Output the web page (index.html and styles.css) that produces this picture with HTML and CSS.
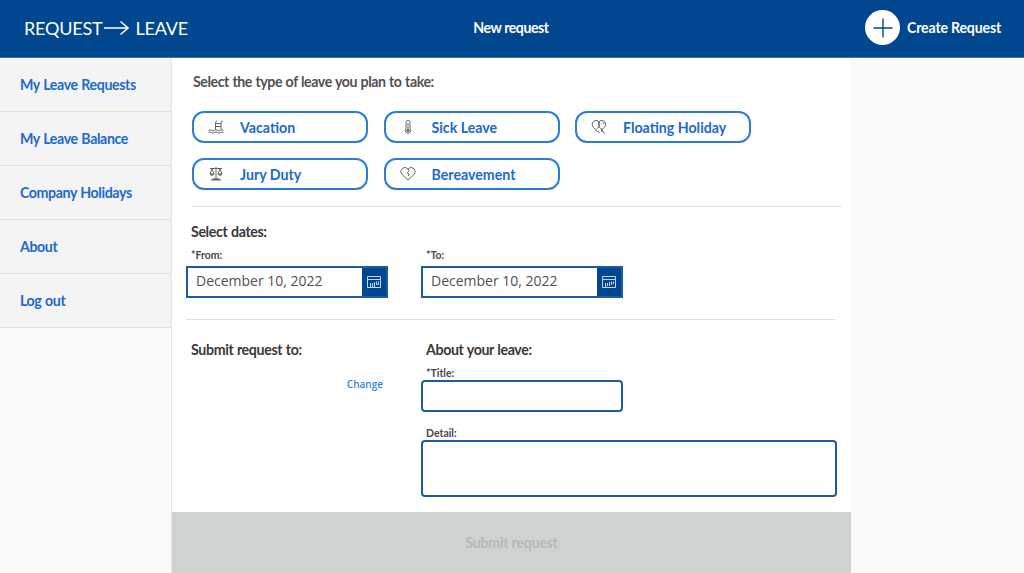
FILE: index.html
```
<!DOCTYPE html>
<html lang="en">
<head>
  <meta charset="UTF-8" />
  <meta name="viewport" content="width=device-width, initial-scale=1.0" />
  <title>Request Leave - New request</title>
  <link rel="stylesheet" href="styles.css">
</head>
<body>

  <header class="topbar">
    <div class="logo">
      <span>REQUEST</span>
      <svg class="logo-arrow" viewBox="0 0 25 16"><path d="M0 8H24M16.5 1.5L24 8L16.5 14.5"/></svg>
      <span>LEAVE</span>
    </div>
    <h1 class="page-title">New request</h1>
    <a class="create">
      <span class="create-icon">
        <svg viewBox="0 0 20 20"><path d="M10 0.5V19.5M0.5 10H19.5"/></svg>
      </span>
      <span class="create-label">Create Request</span>
    </a>
  </header>

  <div class="layout">
    <nav class="sidebar">
      <a>My Leave Requests</a>
      <a>My Leave Balance</a>
      <a>Company Holidays</a>
      <a>About</a>
      <a>Log out</a>
    </nav>

    <main class="content">
      <!-- Leave type -->
      <section class="types">
        <h2 class="types-title">Select the type of leave you plan to take:</h2>
        <div class="type-grid">
          <button class="type-btn">
            <svg class="icon" viewBox="0 0 16 16"><path d="M7.5 10.5V3.5Q7.5 2 9.2 2M13 10.5V3.5Q13 2 14.8 2M7.5 4.5H13M7.5 7.5H13M0.5 11.5Q2 10 3.5 11.3T6.5 11.3T9.5 11.3T12.5 11.3T15.5 11.3M0.5 13.7Q2 12.2 3.5 13.5T6.5 13.5T9.5 13.5T12.5 13.5T15.5 13.5"/></svg>
            Vacation
          </button>
          <button class="type-btn">
            <svg class="icon" viewBox="0 0 16 16"><path d="M6 9.8V3.5A2 2 0 0 1 10 3.5V9.8A2.7 2.7 0 1 1 6 9.8ZM8 4V11"/><circle class="solid" cx="8" cy="11.5" r="1.6"/></svg>
            Sick Leave
          </button>
          <button class="type-btn">
            <svg class="icon" viewBox="0 0 16 16"><path d="M5.2 10.3C2.8 9.8 1.2 7.4 1.2 5.2A3.9 3.9 0 0 1 8 2.7A3.8 3.8 0 0 1 14.6 5.2C14.6 7.6 13 9.4 10.8 10.2C8.8 9.4 7.3 7.3 7.3 5.2Q7.3 3.6 8 2.7Q9 4 8.8 5.4Q8.5 7.6 6.5 9.5M5.2 10.3Q4.6 12.4 6.4 12.4T8.5 14M10.8 10.2L10 11.5H11.6ZM11 11.5Q10.5 13 12 13T13.5 14.5M11.6 3.3Q12.8 3.7 12.9 5"/></svg>
            Floating Holiday
          </button>
          <button class="type-btn">
            <svg class="icon" viewBox="0 0 16 16"><path d="M2 2.5H14M8 1V12.5M4 2.5L2 8M4 2.5L6 8M12 2.5L10 8M12 2.5L14 8"/><path class="solid" d="M1.5 7.5H6.5Q6 9.7 4 9.7T1.5 7.5ZM9.5 7.5H14.5Q14 9.7 12 9.7T9.5 7.5ZM2.5 14.5Q4 12 8 12T13.5 14.5Z"/></svg>
            Jury Duty
          </button>
          <button class="type-btn">
            <svg class="icon" viewBox="0 0 16 16"><path d="M8 14.2L1.8 8.2A4 4 0 0 1 8 3A4 4 0 0 1 14.2 8.2ZM8 3L9.3 4.8L7.2 6.8L9.2 8L8 10.5"/></svg>
            Bereavement
          </button>
        </div>
      </section>

      <!-- Dates -->
      <section class="dates">
        <h2>Select dates:</h2>
        <div class="columns">
          <div class="field">
            <label for="from">*From:</label>
            <div class="date-box">
              <input id="from" type="text" value="December 10, 2022">
              <button class="date-btn" aria-label="Pick start date">
                <svg viewBox="0 0 14 14"><path d="M0.5 1.5H13.5V12.5H0.5ZM0.5 4.5H13.5M3.5 12V8M5.5 8V12M7.5 12V7M9.5 6.5V9.5H11.5V6.5"/></svg>
              </button>
            </div>
          </div>
          <div class="field">
            <label for="to">*To:</label>
            <div class="date-box">
              <input id="to" type="text" value="December 10, 2022">
              <button class="date-btn" aria-label="Pick end date">
                <svg viewBox="0 0 14 14"><path d="M0.5 1.5H13.5V12.5H0.5ZM0.5 4.5H13.5M3.5 12V8M5.5 11V8M7.5 11V7M9.5 6.5V10M11.5 6.5V9"/></svg>
              </button>
            </div>
          </div>
        </div>
      </section>

      <!-- Approver and details -->
      <section class="details columns">
        <div class="approver">
          <h2>Submit request to:</h2>
          <a class="change">Change</a>
        </div>
        <div class="about">
          <h2>About your leave:</h2>
          <label for="title">*Title:</label>
          <input id="title" class="text-box" type="text">
          <label for="detail">Detail:</label>
          <textarea id="detail" class="text-box"></textarea>
        </div>
      </section>

      <button class="submit" disabled>Submit request</button>
    </main>
  </div>

</body>
</html>
```
FILE: styles.css
```
:root {
  --brand: #00478f;
  --link: #2069ce;
  --outline: #2b7cd3;
  --field: #1c5ba2;
  --text: #3b3838;
  --line: #dfdfdf;
}

* {
  box-sizing: border-box;
  margin: 0;
  padding: 0;
}

body {
  height: 100vh;
  background: #f9f9f9;
  color: var(--text);
  font-family: Lato, "Liberation Sans", sans-serif;
  font-size: 14px;
  overflow: hidden;
}

button,
input,
textarea {
  font-family: inherit;
}

/* Top bar */
.topbar {
  display: grid;
  grid-template-columns: 1fr auto 1fr;
  align-items: center;
  height: 58px;
  padding: 0 23px 2px 24px;
  background: var(--brand);
  border-bottom: 1px solid #4479b0;
  color: #fff;
}

.logo {
  display: flex;
  align-items: center;
  font-size: 18px;
  letter-spacing: -0.2px;
}

.logo-arrow {
  width: 25px;
  height: 16px;
  margin: 0 6px 0 2px;
  fill: none;
  stroke: #fff;
  stroke-width: 1.5;
}

.page-title {
  padding-right: 3px;
  font-size: 14.2px;
  font-weight: 700;
  letter-spacing: -0.48px;
}

.create {
  display: flex;
  align-items: center;
  justify-content: flex-end;
  gap: 7px;
  font-size: 14.2px;
  font-weight: 700;
  letter-spacing: -0.2px;
}

.create-icon {
  display: flex;
  align-items: center;
  justify-content: center;
  width: 35px;
  height: 35px;
  border-radius: 50%;
  background: #fff;
}

.create-icon svg {
  width: 20px;
  height: 20px;
  fill: none;
  stroke: var(--brand);
  stroke-width: 1.4;
}

/* Page columns */
.layout {
  display: flex;
  height: calc(100vh - 58px);
}

.sidebar {
  width: 172px;
  border-right: 1px solid #e6e6e6;
}

.sidebar a {
  display: flex;
  align-items: center;
  height: 54px;
  padding: 0 0 1px 20px;
  background: #f4f4f4;
  border-bottom: 1px solid var(--line);
  color: var(--link);
  font-size: 14.2px;
  font-weight: 700;
  letter-spacing: -0.4px;
  word-spacing: 0.6px;
}

.content {
  display: flex;
  flex-direction: column;
  width: 679px;
  background: #fff;
}

h2 {
  font-size: 14.2px;
  line-height: 19px;
  font-weight: 700;
  letter-spacing: -0.36px;
  word-spacing: 0.5px;
}

label {
  display: block;
  padding-left: 5px;
  color: #4a4646;
  font-size: 10.5px;
  line-height: 12px;
  font-weight: 700;
}

/* Leave types */
.types {
  height: 149px;
  margin: 0 9px 0 20px;
  padding-top: 14px;
  border-bottom: 1px solid var(--line);
}

.types-title {
  padding-left: 1px;
  color: #555050;
  letter-spacing: -0.44px;
}

.type-grid {
  display: grid;
  grid-template-columns: repeat(3, 176px);
  gap: 15px 15.5px;
  margin-top: 20px;
}

.type-btn {
  display: flex;
  align-items: center;
  gap: 16px;
  height: 32px;
  padding: 0 0 0 14px;
  border: 2px solid var(--outline);
  border-radius: 12px;
  background: #fff;
  color: var(--link);
  font-size: 14.2px;
  font-weight: 700;
}

.icon {
  width: 16px;
  height: 16px;
  fill: none;
  stroke: #666;
  stroke-width: 1;
}

.icon .solid {
  fill: #666;
  stroke: none;
}

/* Dates */
.columns {
  display: grid;
  grid-template-columns: 202px 415px;
  column-gap: 33px;
}

.dates {
  height: 113px;
  margin: 0 15px 0 14px;
  padding-top: 15px;
  border-bottom: 1px solid var(--line);
}

.dates h2,
.details h2 {
  padding-left: 5px;
}

.dates .columns {
  margin-top: 8px;
}

.date-box {
  display: flex;
  width: 202px;
  height: 32px;
  margin-top: 5px;
  border: 2px solid var(--field);
}

.date-box input {
  flex: 1;
  min-width: 0;
  padding: 0 0 3px 8px;
  border: none;
  color: #505050;
  font-family: "Open Sans", sans-serif;
  font-size: 14px;
}

.date-btn {
  display: flex;
  align-items: center;
  justify-content: center;
  width: 24px;
  border: none;
  background: var(--brand);
}

.date-btn svg {
  width: 14px;
  height: 14px;
  fill: none;
  stroke: #c3d8f0;
  stroke-width: 1;
}

/* Approver and leave details */
.details {
  flex: 1;
  margin-left: 14px;
  padding-top: 20px;
}

.change {
  display: block;
  margin-top: 18px;
  padding-right: 5px;
  color: #3b7fd6;
  font-family: "Open Sans", sans-serif;
  font-size: 10px;
  font-weight: 600;
  text-align: right;
}

.about label {
  margin-top: 8px;
}

.text-box {
  display: block;
  width: 202px;
  height: 32px;
  margin-top: 1px;
  border: 2px solid var(--field);
  border-radius: 4px;
  background: #fff;
  resize: none;
}

textarea.text-box {
  width: 416px;
  height: 57px;
}

.about .text-box + label {
  margin-top: 15px;
}

.submit {
  height: 61px;
  border: none;
  background: #ced3d2;
  color: #b4b9b8;
  font-size: 14.2px;
  font-weight: 700;
  letter-spacing: -0.25px;
}
```
